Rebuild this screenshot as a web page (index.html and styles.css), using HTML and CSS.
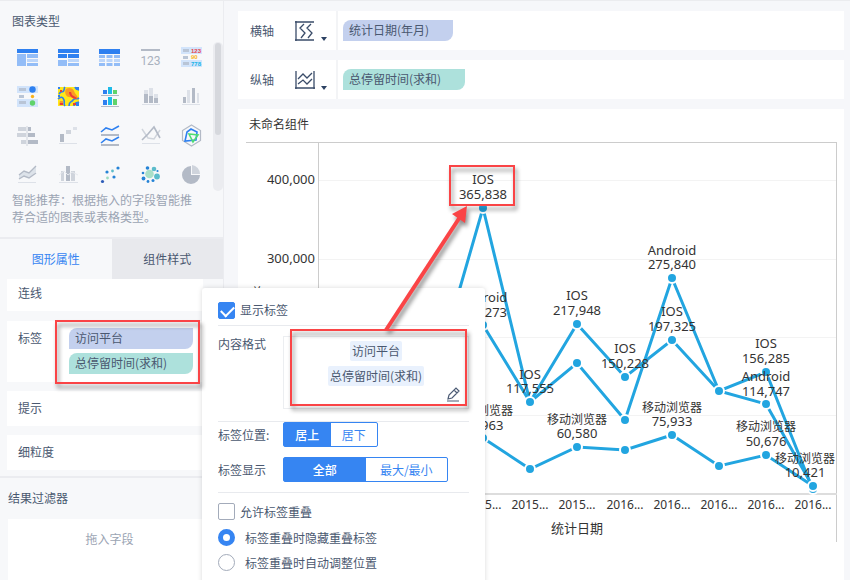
FILE: index.html
```html
<!DOCTYPE html>
<html lang="zh-CN">
<head>
    <meta charset="UTF-8">
    <meta name="viewport" content="width=device-width, initial-scale=1.0">
    <title>未命名组件</title>
    <link rel="stylesheet" href="styles.css">
</head>
<body>
    <div class="app">
        <aside class="sidebar">
            <section class="chart-types">
                <h2 class="section-title">图表类型</h2>
                <div class="type-area">
                    <div class="type-grid">
                        <button class="type" aria-label="分组表"><svg viewBox="0 0 21 21"><path fill="#2e80f0" d="M0 1h21v4H0z"/><path fill="#93bdf7" d="M0 6h9v12H0zM10 6h11v4H10zM10 15h11v3H10z"/><path fill="#bcd6fa" d="M10 11h11v3H10z"/></svg></button>
                        <button class="type" aria-label="交叉表"><svg viewBox="0 0 21 21"><path fill="#2e80f0" d="M0 1h21v4H0zM0 6h9v4H0zM10 6h11v4H10z"/><path fill="#93bdf7" d="M0 12h9v6H0zM10 15h11v3H10z"/><path fill="#bcd6fa" d="M10 11h11v3H10z"/></svg></button>
                        <button class="type" aria-label="明细表"><svg viewBox="0 0 21 21"><path fill="#2e80f0" d="M0 1h21v5H0z"/><path fill="#93bdf7" d="M0 7h6v3H0zM7.500 7h6v3h-6zM15 7h6v3h-6zM0 15h6v3H0zM7.500 15h6v3h-6zM15 15h6v3h-6z"/><path fill="#bcd6fa" d="M0 11h6v3H0zM7.500 11h6v3h-6zM15 11h6v3h-6z"/></svg></button>
                        <button class="type" aria-label="指标卡"><svg viewBox="0 0 21 21"><path fill="#b3bac6" d="M1 1h19v2H1z"/><text class="icon-number" x="10.500" y="17" text-anchor="middle">123</text></svg></button>
                        <button class="type" aria-label="KPI 指标卡"><svg viewBox="0 0 21 21"><path fill="#d2e4fb" d="M0 -1h21v7H0zM0 12h21v7H0z"/><path fill="#b9c5d6" d="M2 1h6v3H2zM2 8h5v3H2zM2 14h6v3H2z"/><g class="icon-kpi"><text x="10" y="5" fill="#e8434c">123</text><text x="10" y="11" fill="#f9b21c">90</text><text x="10" y="18" fill="#17b5e8">778</text></g></svg></button>

                        <button class="type" aria-label="颜色表格"><svg viewBox="0 0 21 21"><path fill="#d2e4fb" d="M0 -1h21v7H0zM0 12h21v8H0z"/><path fill="#b9c5d6" d="M2 1h7v3H2zM2 8h5v3H2zM2 14h7v3H2z"/><circle cx="15.500" cy="2.500" r="3.200" fill="#2e80f0"/><circle cx="15.500" cy="9.500" r="1.700" fill="#f9b21c"/><circle cx="15.500" cy="16" r="2.700" fill="#5fd36b"/></svg></button>
                        <button class="type" aria-label="热力地图"><svg viewBox="0 0 21 21"><path fill="#ffe81a" d="M0 0h21v19H0z"/><path fill="none" stroke="#2e80f0" stroke-width="1.600" d="M1 7c3-5 4 0 5-4s0-2 1-3M0 12c3-3 5-2 6 1s-1 4 1 6M21 3c-4-1-3-1-4-3M21 11c-3 2-4-1-6 2s-4 1-4 6M16 19c0-4 3-3 5-4"/><path fill="#fb9a25" d="M8 2c3-2 7-1 8 2s3 4 4 7c-4 2-6-1-9-1S6 5 8 2zM2 14l3 0 0 4H1z"/><path fill="#ee3b35" d="M11 5l2 0 1 3 5 3-1 1c-3 0-7-3-7-7zM2 3h2v2H2zM2 16h3v2H2zM15 16h3v2h-3z"/><path fill="#2e80f0" d="M0 0h2v2H0zM18 0h3v3h-3zM0 8h2v2H0zM18 16h3v3h-3z"/></svg></button>
                        <button class="type" aria-label="分区柱形图"><svg viewBox="0 0 21 21"><path fill="#2e80f0" d="M4 3h4v4H4zM4 13h4v5H4z"/><path fill="#1dbbe8" d="M9 0h4v7H9zM9 10h4v8H9z"/><path fill="#5fd36b" d="M14 3h4v4h-4zM14 12h4v6h-4z"/><path fill="#b3bac6" d="M2 8h18v1H2zM2 19h18v1H2z"/></svg></button>
                        <button class="type" aria-label="堆积柱形图"><svg viewBox="0 0 21 21"><path fill="#dde1e8" d="M4 3h4v4H4zM9 1h4v8H9zM14 7h4v4h-4zM2 17h18v1H2z"/><path fill="#b3bac6" d="M4 7h4v9H4zM9 9h4v7H9zM14 11h4v5h-4z"/></svg></button>
                        <button class="type" aria-label="多系列柱形图"><svg viewBox="0 0 21 21"><path fill="#b3bac6" d="M2 10h3v6H2zM11 1h3v15h-3z"/><path fill="#dde1e8" d="M6 3h3v13H6zM16 6h2v10h-2zM1 17h18v1H1z"/></svg></button>

                        <button class="type" aria-label="对比柱状图"><svg viewBox="0 0 21 21"><path fill="#cfd4dc" d="M1 1h8v4H1zM0 7h9v4H0zM4 14h5v4H4zM9.500 0h1v20h-1z"/><path fill="#b3bac6" d="M11 1h3v4h-3zM11 7h7v4h-7zM11 14h10v4H11z"/></svg></button>
                        <button class="type" aria-label="瀑布图"><svg viewBox="0 0 21 21"><path fill="#b3bac6" d="M2 8h4v8H2z"/><path fill="#cfd4dc" d="M8 4h5v4H8z"/><path fill="#dde1e8" d="M15 1h4v3h-4zM1 17h18v1H1z"/></svg></button>
                        <button class="type" aria-label="分区折线图"><svg viewBox="0 0 21 21"><path fill="none" stroke="#2e80f0" stroke-width="1.600" d="M2 6l5-4 6 2 7-4M2 17l5-4 6 2 7-4"/><path fill="#b3bac6" d="M2 8h18v2H2zM2 18h18v2H2z"/></svg></button>
                        <button class="type" aria-label="折线图"><svg viewBox="0 0 21 21"><path fill="none" stroke="#cfd4dc" stroke-width="1.500" d="M2 3l6 9 6 1 6-9"/><path fill="none" stroke="#b3bac6" stroke-width="1.600" d="M2 14l6-6 6-7 6 11"/><path fill="#dde1e8" d="M2 17h18v1H2z"/></svg></button>
                        <button class="type" aria-label="雷达图"><svg viewBox="0 0 21 21"><path fill="none" stroke="#b3bac6" stroke-width="1.200" d="M10.500 -1l9 5.500v10l-9 5.500-9-5.500v-10z"/><path fill="none" stroke="#2e80f0" stroke-width="1.600" d="M10 3l6 3-1 8-11 1 2-9z"/><path fill="none" stroke="#4fdc72" stroke-width="1.600" d="M8 8l9 1-5 7z"/></svg></button>

                        <button class="type" aria-label="面积图"><svg viewBox="0 0 21 21"><path fill="#dde3ea" d="M2 10l5-4 5 2 7-7v6l-7 6-5-2-5 3z"/><path fill="none" stroke="#b3bac6" stroke-width="1.400" d="M2 10l5-4 5 2 7-7M2 14l5-3 5 2 7-5"/><path fill="#dde1e8" d="M1 17h18v1H1z"/></svg></button>
                        <button class="type" aria-label="组合图"><svg viewBox="0 0 21 21"><path fill="#cfd4dc" d="M3 6h3v10H3zM13 6h4v10h-4z"/><path fill="#b3bac6" d="M8 1h4v15H8z"/><path fill="#dde1e8" d="M1 17h19v1H1z"/><path fill="none" stroke="#e6e9ee" d="M1 10l5-4 4 4 4-3 6 3"/></svg></button>
                        <button class="type" aria-label="散点图"><svg viewBox="0 0 21 21"><g fill="#2583d6"><circle cx="3.500" cy="16.500" r="1.600" fill="#2d5cb8"/><circle cx="8" cy="7" r="1.600"/><circle cx="15" cy="12" r="1.600"/><circle cx="19" cy="3" r="1.600"/><circle cx="13.500" cy="6" r="1.400" fill="#5dbcc9"/><circle cx="8.500" cy="13" r="1.400" fill="#9bdcc0"/></g></svg></button>
                        <button class="type" aria-label="聚合气泡图"><svg viewBox="0 0 21 21"><circle cx="9.500" cy="9" r="4.300" fill="#a9dfc8"/><g fill="#5cbccb"><circle cx="14" cy="4" r="2.300"/><circle cx="17" cy="11.500" r="2.900"/></g><g fill="#2583d6"><circle cx="7.500" cy="3" r="1.800"/><circle cx="3" cy="8" r="1.300"/><circle cx="3.500" cy="13.500" r="1.900"/><circle cx="8" cy="16.500" r="1.400"/><circle cx="13" cy="15.500" r="1.500"/><circle cx="17.500" cy="6" r="1.100"/></g></svg></button>
                        <button class="type" aria-label="饼图"><svg viewBox="0 0 21 21"><path fill="#b3bac6" d="M10 1a9 9 0 1 0 9 9h-9z"/><path fill="#cfd4dc" d="M11 0a9 9 0 0 1 8 9h-8z"/></svg></button>
                    </div>
                    <div class="scroll-track"><div class="scroll-thumb"></div></div>
                </div>
                <p class="hint">智能推荐：根据拖入的字段智能推荐合适的图表或表格类型。</p>
            </section>

            <div class="tabs" role="tablist">
                <button class="tab tab-active" role="tab" aria-selected="true">图形属性</button>
                <button class="tab" role="tab" aria-selected="false">组件样式</button>
            </div>

            <div class="props">
                <div class="prop prop-line">连线</div>
                <div class="prop prop-label">
                    <span class="prop-name">标签</span>
                    <div class="prop-fields">
                        <span class="field field-dim">访问平台</span>
                        <span class="field field-num">总停留时间(求和)</span>
                    </div>
                </div>
                <div class="prop">提示</div>
                <div class="prop">细粒度</div>
            </div>

            <section class="filters">
                <h2 class="section-title">结果过滤器</h2>
                <div class="drop-zone">拖入字段</div>
            </section>
        </aside>

        <main class="main">
            <div class="axis-row">
                <span class="axis-name">横轴</span>
                <button class="axis-button" aria-label="横轴设置">
                    <svg class="axis-icon" viewBox="0 0 20 20"><path d="M1 0v20M0 1h19M0 19h19M9 3L5 7l5 5-4 5M16 3l-4 4 5 5-4 5"/></svg>
                    <svg class="caret" viewBox="0 0 6 4"><path d="M0 0h6L3 4z"/></svg>
                </button>
                <div class="axis-fields"><span class="field field-dim">统计日期(年月)</span></div>
            </div>
            <div class="axis-row">
                <span class="axis-name">纵轴</span>
                <button class="axis-button" aria-label="纵轴设置">
                    <svg class="axis-icon" viewBox="0 0 20 20"><path d="M1 1v18M19 1v18M0 18h20M3 9l5-5 4 4 5-5M3 14l5-4 4 4 5-5"/></svg>
                    <svg class="caret" viewBox="0 0 6 4"><path d="M0 0h6L3 4z"/></svg>
                </button>
                <div class="axis-fields"><span class="field field-num">总停留时间(求和)</span></div>
            </div>

            <section class="chart-card">
                <h1 class="chart-title">未命名组件</h1>
                <svg class="chart" viewBox="238 140 606 440" role="img" aria-label="总停留时间(求和)">
                    <g class="grid-lines">
                        <path d="M319 180.500h517M319 259.500h517M319 337.500h517M319 415.500h517"/>
                    </g>
                    <path class="frame" d="M246 142.500h591M318.500 142v351M836.500 142v400"/>
                    <path class="x-axis" d="M319 494h518"/>

                    <g class="axis-text" text-anchor="end">
                        <text x="315" y="184">400,000</text>
                        <text x="315" y="263">300,000</text>
                        <text x="315" y="341">200,000</text>
                        <text x="315" y="420">100,000</text>
                    </g>
                    <text class="y-title" x="256" y="286">总停留时间(求和)</text>

                    <g class="series">
                        <polyline points="436,371 483,208 530,402 577,324 625,377 672,340 719,391 766,372 813,490"/>
                        <polyline points="483,325 530,402 577,363 625,420 672,278 719,391 766,404 813,487"/>
                        <polyline points="483,438 530,469 577,447 625,450 672,435 719,466 766,455 813,486"/>
                    </g>
                    <g class="dots">
                        <circle cx="483" cy="208" r="5"/>
                        <circle cx="530" cy="402" r="5"/>
                        <circle cx="577" cy="324" r="5"/>
                        <circle cx="625" cy="377" r="5"/>
                        <circle cx="672" cy="340" r="5"/>
                        <circle cx="766" cy="372" r="5"/>
                        <circle cx="813" cy="489" r="5"/>
                        <circle cx="483" cy="325" r="5"/>
                        <circle cx="577" cy="363" r="5"/>
                        <circle cx="625" cy="420" r="5"/>
                        <circle cx="672" cy="278" r="5"/>
                        <circle cx="719" cy="391" r="5"/>
                        <circle cx="766" cy="404" r="5"/>
                        <circle cx="483" cy="438" r="5"/>
                        <circle cx="530" cy="469" r="5"/>
                        <circle cx="577" cy="447" r="5"/>
                        <circle cx="625" cy="450" r="5"/>
                        <circle cx="672" cy="435" r="5"/>
                        <circle cx="719" cy="466" r="5"/>
                        <circle cx="766" cy="455" r="5"/>
                        <circle cx="813" cy="486" r="5"/>
                    </g>

                    <g class="labels" text-anchor="middle">
                        <text x="483" y="184">IOS</text><text x="483" y="199">365,838</text>
                        <text x="483" y="302">Android</text><text x="483" y="317">227,273</text>
                        <text x="530" y="379">IOS</text><text x="530" y="393">117,555</text>
                        <text x="577" y="300">IOS</text><text x="577" y="315">217,948</text>
                        <text x="625" y="353">IOS</text><text x="625" y="368">150,228</text>
                        <text x="672" y="255">Android</text><text x="672" y="269">275,840</text>
                        <text x="672" y="316">IOS</text><text x="672" y="331">197,325</text>
                        <text x="766" y="348">IOS</text><text x="766" y="363">156,285</text>
                        <text x="766" y="381">Android</text><text x="766" y="396">114,747</text>
                        <text class="cjk" x="483" y="415">移动浏览器</text><text x="483" y="430">70,963</text>
                        <text class="cjk" x="577" y="424">移动浏览器</text><text x="577" y="438">60,580</text>
                        <text class="cjk" x="672" y="412">移动浏览器</text><text x="672" y="426">75,933</text>
                        <text class="cjk" x="766" y="431">移动浏览器</text><text x="766" y="446">50,676</text>
                        <text class="cjk" x="805" y="463">移动浏览器</text><text x="805" y="477">10,421</text>
                    </g>

                    <g class="x-labels" text-anchor="middle">
                        <text x="483" y="509">2015...</text>
                        <text x="530" y="509">2015...</text>
                        <text x="577" y="509">2015...</text>
                        <text x="625" y="509">2016...</text>
                        <text x="672" y="509">2016...</text>
                        <text x="719" y="509">2016...</text>
                        <text x="766" y="509">2016...</text>
                        <text x="813" y="509">2016...</text>
                    </g>
                    <text class="x-title" x="577" y="533" text-anchor="middle">统计日期</text>
                </svg>
            </section>
        </main>
    </div>

    <!-- Label settings -->
    <div class="popup">
        <div class="popup-head">
            <input type="checkbox" id="showLabel" class="check" checked>
            <label for="showLabel">显示标签</label>
        </div>
        <div class="popup-content">
            <span class="popup-name">内容格式</span>
            <div class="format-box">
                <span class="token">访问平台</span>
                <span class="token">总停留时间(求和)</span>
                <button class="edit" aria-label="编辑"><svg viewBox="0 0 14 15"><path d="M2 12l1-4 7-7 3 3-7 7zM8 3l3 3M1 14h12"/></svg></button>
            </div>
        </div>
        <div class="popup-switches">
            <div class="switch-row">
                <span class="popup-name">标签位置:</span>
                <div class="segment">
                    <button class="seg seg-active">居上</button>
                    <button class="seg">居下</button>
                </div>
            </div>
            <div class="switch-row">
                <span class="popup-name">标签显示</span>
                <div class="segment segment-wide">
                    <button class="seg seg-active">全部</button>
                    <button class="seg">最大/最小</button>
                </div>
            </div>
        </div>
        <div class="popup-overlap">
            <div class="option">
                <input type="checkbox" id="allowOverlap" class="check">
                <label for="allowOverlap">允许标签重叠</label>
            </div>
            <div class="option option-radio">
                <input type="radio" name="overlap" id="overlapHide" class="radio" checked>
                <label for="overlapHide">标签重叠时隐藏重叠标签</label>
            </div>
            <div class="option option-radio">
                <input type="radio" name="overlap" id="overlapMove" class="radio">
                <label for="overlapMove">标签重叠时自动调整位置</label>
            </div>
        </div>
    </div>

    <!-- Red callouts over the panels -->
    <svg class="callouts" viewBox="0 0 850 580" width="850" height="580" aria-hidden="true">
        <path class="arrow-line" d="M386 330L460 217"/>
        <path class="arrow-head" d="M467 206l-15 8 13 9z"/>
        <rect x="56" y="321" width="143" height="62"/>
        <rect x="291" y="330" width="175" height="75"/>
        <rect x="450" y="166" width="64" height="39"/>
    </svg>
</body>
</html>
```

FILE: styles.css
```css
* { box-sizing: border-box; }
body {
    margin: 0;
    font-family: "Noto Sans CJK SC", "Noto Sans", sans-serif;
    font-size: 12px;
    line-height: 16px;
    color: #4a5870;
    background-color: #f6f7fa;
    overflow: hidden;
}
button {
    margin: 0;
    padding: 0;
    border: none;
    background: none;
    font: inherit;
    color: inherit;
    cursor: pointer;
}
svg { display: block; overflow: visible; }
h1, h2, p { margin: 0; }

.app {
    display: flex;
    height: 100vh;
    border-top: 1px solid #ebecef;
}

/* Sidebar */
.sidebar {
    width: 224px;
    flex: none;
    display: flex;
    flex-direction: column;
    border-right: 1px solid #ebecf0;
    background-color: #f7f8fa;
}
.section-title {
    font-size: 12px;
    font-weight: normal;
}
.chart-types {
    padding-bottom: 12px;
    border-bottom: 2px solid #ebecf0;
}
.chart-types .section-title { padding: 12px 12px 10px; }
.type-area {
    display: flex;
    justify-content: space-between;
    height: 152px;
    padding-left: 7px;
}
.type-grid {
    display: grid;
    grid-template-columns: repeat(5, 41px);
    grid-auto-rows: 39px;
}
.type {
    display: flex;
    align-items: center;
    justify-content: center;
}
.type svg { width: 21px; height: 21px; }
.icon-number {
    font-family: "Roboto", sans-serif;
    font-size: 12px;
    fill: #a9b1be;
}
.icon-kpi {
    font-family: "Liberation Sans", sans-serif;
    font-size: 6px;
    font-weight: bold;
}
.scroll-track {
    width: 10px;
    height: 149px;
    margin-top: 3px;
    padding: 1px 2px;
    border-radius: 5px;
    background-color: #ebecf0;
    flex: none;
}
.scroll-thumb {
    height: 92px;
    border-radius: 3px;
    background-color: #d6d8dd;
}
.hint {
    padding: 0 24px 0 12px;
    line-height: 17px;
    color: #9ba4b3;
}

.tabs { display: flex; }
.tab {
    flex: 1;
    height: 40px;
    background-color: #e8e9ed;
}
.tab-active {
    background-color: #f7f8fa;
    color: #3685f2;
}

.props {
    display: flex;
    flex-direction: column;
    gap: 9px;
    padding: 0 20px 6px 7px;
    border-bottom: 2px solid #ebecf0;
}
.prop {
    padding: 9px 11px 10px;
    background-color: #fff;
}
.prop-line { padding-top: 6px; margin-bottom: 1px; }
.prop-label {
    display: flex;
    gap: 27px;
    height: 61px;
    padding: 7px 0 7px 11px;
}
.prop-name { padding-top: 2px; }
.prop-fields {
    display: flex;
    flex-direction: column;
    gap: 4px;
    width: 124px;
}
.field {
    height: 21px;
    padding: 2px 24px 3px 6px;
    border-radius: 8px 0 8px 0;
    white-space: nowrap;
}
.field-dim { background-color: #c3d0ee; }
.field-num { background-color: #ade1dc; }

.filters {
    flex: 1;
    display: flex;
    flex-direction: column;
    gap: 13px;
    padding: 12px 20px 0 8px;
}
.drop-zone {
    flex: 1;
    padding: 12px 0 0 8px;
    text-align: center;
    color: #9ba4b3;
    background-color: #fff;
}

/* Main area */
.main {
    flex: 1;
    display: flex;
    flex-direction: column;
    gap: 10px;
    padding: 10px 6px 0 14px;
}
.axis-row {
    display: flex;
    align-items: center;
    height: 39px;
    flex: none;
    padding-left: 12px;
    background-color: #fff;
}
.axis-name { width: 45px; }
.axis-button {
    display: flex;
    align-items: flex-end;
    gap: 6px;
    width: 41px;
}
.axis-icon {
    width: 20px;
    height: 20px;
    fill: none;
    stroke: #3a4c69;
    stroke-width: 1.3;
}
.caret { width: 6px; height: 4px; fill: #2d4263; }
.axis-fields {
    display: flex;
    padding: 9px 5px;
    border-left: 2px solid #f3f4f6;
}
.chart-card {
    flex: 1;
    background-color: #fff;
}
.chart-title {
    padding: 7px 11px 8px;
    font-size: 12px;
    font-weight: normal;
    color: #333;
}

/* Chart */
.chart {
    width: 100%;
    font-family: "Noto Sans", "Noto Sans CJK SC", sans-serif;
    font-size: 12px;
    fill: #333;
}
.grid-lines path { stroke: #f3f3f3; }
.frame { fill: none; stroke: #ccc; }
.x-axis { stroke: #ddd; stroke-width: 2; }
.y-title { writing-mode: vertical-rl; }
.axis-text, .labels { font-size: 13px; }
.labels .cjk { font-size: 12px; }
.x-title { font-size: 13px; }
.series {
    fill: none;
    stroke: #22a5e0;
    stroke-width: 3;
}
.dots {
    fill: #22a5e0;
    stroke: #fff;
    stroke-width: 2;
}

/* Popup */
.popup {
    position: absolute;
    top: 288px;
    left: 202px;
    width: 283px;
    height: 310px;
    padding: 0 16px;
    border-radius: 3px;
    background-color: #fff;
    box-shadow: 0 0 5px rgba(0, 0, 0, 0.15);
}
.popup-head {
    display: flex;
    align-items: center;
    gap: 5px;
    height: 38px;
    padding-top: 7px;
    border-bottom: 1px solid #e8eaee;
}
.popup-content {
    display: flex;
    padding: 10px 0 12px;
    border-bottom: 1px solid #e8eaee;
}
.popup-name { width: 65px; flex: none; }
.format-box {
    position: relative;
    flex: 1;
    display: flex;
    flex-direction: column;
    align-items: center;
    gap: 5px;
    height: 73px;
    padding-top: 4px;
    border: 1px solid #eceef1;
}
.token {
    height: 20px;
    padding: 2px;
    border-radius: 2px;
    background-color: #e9f1fd;
}
.edit {
    position: absolute;
    right: 8px;
    bottom: 6px;
}
.edit svg {
    width: 14px;
    height: 15px;
    fill: none;
    stroke: #4c5b75;
    stroke-width: 1.2;
}
.popup-switches {
    display: flex;
    flex-direction: column;
    gap: 10px;
    padding-bottom: 10px;
    border-bottom: 1px solid #e8eaee;
}
.switch-row { display: flex; align-items: center; }
.segment {
    display: flex;
    width: 95px;
    height: 25px;
    border: 1px solid #3685f2;
    border-radius: 2px;
}
.segment-wide { width: 165px; }
.seg {
    flex: 1;
    color: #3685f2;
}
.seg-active {
    color: #fff;
    font-weight: 500;
    background-color: #3685f2;
}
.popup-overlap { padding-top: 10px; }
.option {
    display: flex;
    align-items: center;
    gap: 5px;
    margin-bottom: 9px;
}
.option-radio { gap: 10px; margin-bottom: 8px; }
.check, .radio {
    appearance: none;
    width: 17px;
    height: 17px;
    margin: 0;
    border: 1px solid #a3abba;
    background-color: #fff;
}
.check { border-radius: 2px; }
.check:checked {
    border-color: #3685f2;
    background-color: #3685f2;
}
.check:checked::after {
    content: "";
    display: block;
    width: 11px;
    height: 6px;
    margin: 3px 0 0 2px;
    border-left: 2px solid #fff;
    border-bottom: 2px solid #fff;
    transform: rotate(-45deg);
}
.radio { border-radius: 50%; }
.radio:checked { border: 5px solid #3685f2; }

/* Callouts */
.callouts {
    position: absolute;
    top: 0;
    left: 0;
    pointer-events: none;
    filter: drop-shadow(2px 4px 2px rgba(0, 0, 0, 0.45));
}
.callouts rect { fill: none; stroke: #fa4446; stroke-width: 2; }
.arrow-line { stroke: #fa4446; stroke-width: 4; }
.arrow-head { fill: #fa4446; }
```
